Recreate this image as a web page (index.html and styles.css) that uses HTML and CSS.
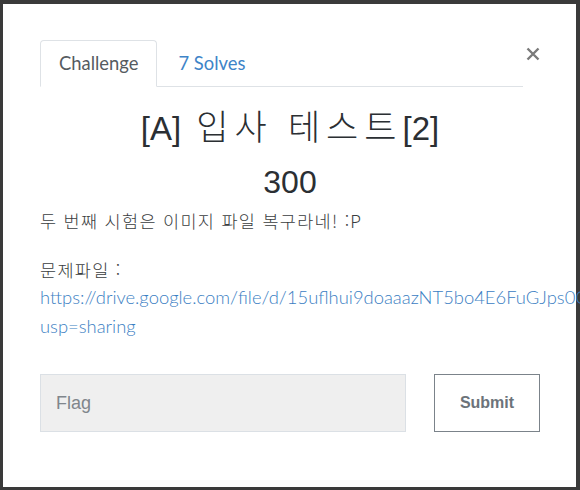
FILE: index.html
```html
<!DOCTYPE html>
<html lang="ko">
<head>
<meta charset="utf-8">
<title>Challenge</title>
<link rel="stylesheet" href="styles.css">
</head>
<body>
<div class="modal">
  <button class="close" aria-label="Close">
    <svg width="14" height="14" viewBox="0 0 14 14"><path d="M1.5 1.5 L12.5 12.5 M12.5 1.5 L1.5 12.5" stroke="#7a7a7a" stroke-width="2.4" stroke-linecap="butt"/></svg>
  </button>
  <ul class="tabs">
    <li class="tab active">Challenge</li>
    <li class="tab link">7 Solves</li>
  </ul>
  <h3 class="name">[A] <span class="ko">입사</span> <span class="ko">테스트</span>[2]</h3>
  <h4 class="value">300</h4>
  <p class="desc">두 번째 시험은 이미지 파일 복구라네! :P</p>
  <p class="desc files">문제파일 :<br><a class="url" href="#">https://drive.google.com/file/d/15uflhui9doaaazNT5bo4E6FuGJps0QxV/view?<br>usp=sharing</a></p>
  <form class="submit-row">
    <input class="flag" type="text" placeholder="Flag">
    <button class="btn" type="button">Submit</button>
  </form>
</div>
</body>
</html>
```

FILE: styles.css
```css
html, body {
  margin: 0;
  padding: 0;
}
body {
  width: 580px;
  height: 490px;
  background: #3a3a3a;
  overflow: hidden;
  padding: 4px 4px 0 3px;
  box-sizing: border-box;
}
.modal {
  position: relative;
  background: #fff;
  width: 573px;
  height: 483px;
  box-sizing: border-box;
  padding: 36px 36px 0 37px;
  font-family: Lato, "Noto Sans CJK KR", sans-serif;
  color: #333;
}
.close {
  position: absolute;
  top: 39px;
  right: 32px;
  width: 22px;
  height: 22px;
  padding: 0;
  border: 0;
  background: transparent;
  display: flex;
  align-items: center;
  justify-content: center;
}
.tabs {
  list-style: none;
  margin: 0;
  padding: 0;
  width: 483px;
  display: flex;
  border-bottom: 1px solid #dee2e6;
}
.tab {
  font-size: 18.4px;
  line-height: 27px;
  padding: 9px 18px 9px;
  border: 1px solid transparent;
  border-radius: 4px 4px 0 0;
  margin-bottom: -1px;
}
.tab.active {
  color: #555b61;
  border-color: #dee2e6 #dee2e6 #fff;
  background: #fff;
}
.tab.link {
  color: #3e84c8;
  padding-left: 20px;
}
.name {
  font-family: "Liberation Sans", "Noto Sans CJK KR", sans-serif;
  font-weight: 400;
  font-size: 33px;
  line-height: 38px;
  word-spacing: 6px;
  text-align: center;
  margin: 19px 0 0;
  color: #2b2f33;
}
.name .ko {
  font-family: "Noto Sans CJK KR", sans-serif;
  font-weight: 300;
  font-size: 35px;
  letter-spacing: 6px;
  word-spacing: 0;
}
.value {
  font-family: "Liberation Sans", "Noto Sans CJK KR", sans-serif;
  font-weight: 400;
  font-size: 32px;
  line-height: 38px;
  text-align: center;
  margin: 15px 0 0;
  color: #2b2f33;
}
.desc {
  font-family: "Noto Sans CJK KR", Lato, sans-serif;
  font-weight: 300;
  font-size: 17.5px;
  letter-spacing: 1.3px;
  line-height: 27.6px;
  margin: 6px 0 0;
  color: #3a3d40;
}
.desc.files {
  margin-top: 21px;
  white-space: nowrap;
}
.url {
  font-family: Lato, sans-serif;
  color: #3b80c3;
  text-decoration: none;
  font-size: 18.4px;
  letter-spacing: 0;
}
.submit-row {
  display: flex;
  gap: 28px;
  margin-top: 34px;
  width: 500px;
}
.flag {
  flex: 1;
  height: 58px;
  box-sizing: border-box;
  background: #efefef;
  border: 1px solid #dbe0e5;
  padding: 0 15px;
  font-family: "Liberation Sans", sans-serif;
  font-size: 18px;
  color: #333;
  outline: none;
  margin: 0;
}
.flag::placeholder {
  color: #80868c;
}
.btn {
  width: 106px;
  height: 58px;
  box-sizing: border-box;
  background: #fff;
  border: 1px solid #7b838a;
  font-family: "Liberation Sans", sans-serif;
  font-weight: 700;
  font-size: 16px;
  color: #6c737a;
  margin: 0;
  padding: 0;
}
```
